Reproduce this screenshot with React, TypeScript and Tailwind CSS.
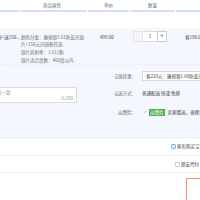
import { Check } from "lucide-react";

const font = { fontFamily: '"Noto Sans CJK SC", "Noto Sans", sans-serif' };

function HeaderCell({ w, label, className = "" }: { w: string; label: string; className?: string }) {
  return (
    <div className={`${w} shrink-0 flex items-center justify-center border-b-2 border-[#cfe0f7] mr-px ${className}`}>
      <span className="text-[#6c6c6c]">{label}</span>
    </div>
  );
}

function Label({ children }: { children: string }) {
  return <span className="w-[21px] shrink-0 flex justify-end whitespace-nowrap">{children}</span>;
}

export default function App() {
  return (
    <div className="w-[200px] h-[200px] overflow-hidden bg-white text-[4.5px] leading-[6.5px] text-[#3c3c3c]" style={font}>
      {/* table header */}
      <div className="flex h-[12px] pt-[1px]">
        <HeaderCell w="w-[20px]" label="" />
        <HeaderCell w="w-[66px]" label="商品属性" className="pr-[4px]" />
        <HeaderCell w="w-[41px]" label="单价" />
        <HeaderCell w="w-[45px]" label="数量" />
        <div className="w-[40px] shrink-0 flex items-center border-b-2 border-[#cfe0f7] pl-[24px] whitespace-nowrap">
          <span className="text-[#6c6c6c]">优惠方式</span>
        </div>
      </div>

      <div className="h-[16px]" />

      {/* order block */}
      <div className="bg-[#f4f8fe] border-b border-[#e3ecf8]">
        <div className="flex h-[37px] pt-[6px] border-b border-dotted border-[#e6edf7]">
          <div className="w-[20px] shrink-0 overflow-hidden flex justify-end whitespace-nowrap">
            <span>镜框+送150...</span>
          </div>
          <div className="w-[66px] shrink-0 pl-[1px] text-[#6c6c6c]">
            <p className="w-[64px]">颜色分类：康视顿1.61防蓝光镜片+150元内镜框任选</p>
            <p className="mt-[2px]">镜片折射率：1.61(薄)</p>
            <p className="mt-[1px]">镜片适合度数：400度以内</p>
          </div>
          <div className="w-[42px] shrink-0 pl-[14px]">499.00</div>
          <div className="w-[45px] shrink-0 pl-[5px] -mt-[3px]">
            <div className="flex h-[11px] w-[34px]">
              <div className="w-[10px] flex items-center justify-center border border-[#e5e5e5] bg-[#f7f7f7] text-[#c9c9c9]">−</div>
              <div className="w-[14px] flex items-center justify-center border-y border-[#dcdcdc] bg-white">1</div>
              <div className="w-[10px] flex items-center justify-center border border-[#cfcfcf] bg-white text-[6px] text-[#555]">+</div>
            </div>
          </div>
          <div className="flex-1 pl-[12px] whitespace-nowrap">省190.00</div>
        </div>

        <div className="flex h-[72px]">
          <div className="w-[77px] shrink-0 pt-[22px] overflow-hidden">
            <div className="-ml-[60px] w-[137px] h-[16px] border border-[#dcdcdc] bg-white relative">
              <span className="absolute left-[2px] top-[1px] whitespace-nowrap text-[#9a9a9a]">选填：填写内容已和卖家协商一致</span>
              <span className="absolute right-[3px] bottom-[1px] text-[#9a9a9a]">0/200</span>
            </div>
          </div>
          <div className="w-[38px] shrink-0" />
          <div className="flex-1 text-[#6c6c6c] overflow-hidden">
            <div className="flex items-center h-[10px] mt-[6px]">
              <Label>店铺优惠：</Label>
              <div className="ml-[6px] flex-1 h-[10px] flex items-center border border-[#d9d9d9] bg-white pl-[3px] whitespace-nowrap text-[#3c3c3c]">
                省220元：康视顿1.60防蓝光镜片
              </div>
            </div>
            <div className="flex items-center h-[8px] mt-[8px]">
              <Label>运送方式：</Label>
              <span className="ml-[6px] whitespace-nowrap text-[#3c3c3c]">普通配送 快递 免邮</span>
            </div>
            <div className="flex items-center h-[8px] mt-[11px] whitespace-nowrap">
              <Label>运费险：</Label>
              <Check className="ml-[7px] w-[4px] h-[4px] shrink-0 text-[#9a9a9a]" strokeWidth={3} />
              <span className="ml-[2px] px-[1px] h-[7px] flex items-center bg-[#4cae4c] text-white">运费险</span>
              <span className="ml-[3px] text-[#3c3c3c]">卖家赠送，退换货可赔</span>
            </div>
          </div>
        </div>
      </div>

      {/* options */}
      <div className="flex items-center h-[18px] border-b border-[#f0f0f0] pl-[171px] whitespace-nowrap text-[#3c3c3c]">
        <span className="w-[5px] h-[5px] shrink-0 border border-[#8fb4f0] bg-[#dbe8fc] rounded-[1px]" />
        <span className="ml-[1px]">匿名购买宝贝</span>
      </div>
      <div className="flex items-center h-[17px] border-b border-[#f0f0f0] pl-[175px] whitespace-nowrap text-[#3c3c3c]">
        <span className="w-[5px] h-[5px] shrink-0 border border-[#cfcfcf] bg-white rounded-[1px]" />
        <span className="ml-[1px]">朋友代付</span>
      </div>

      <div className="pt-[5px] pl-[186px]">
        <div className="h-[30px] w-[40px] border border-[#ff8a8a] bg-white" />
      </div>
    </div>
  );
}
